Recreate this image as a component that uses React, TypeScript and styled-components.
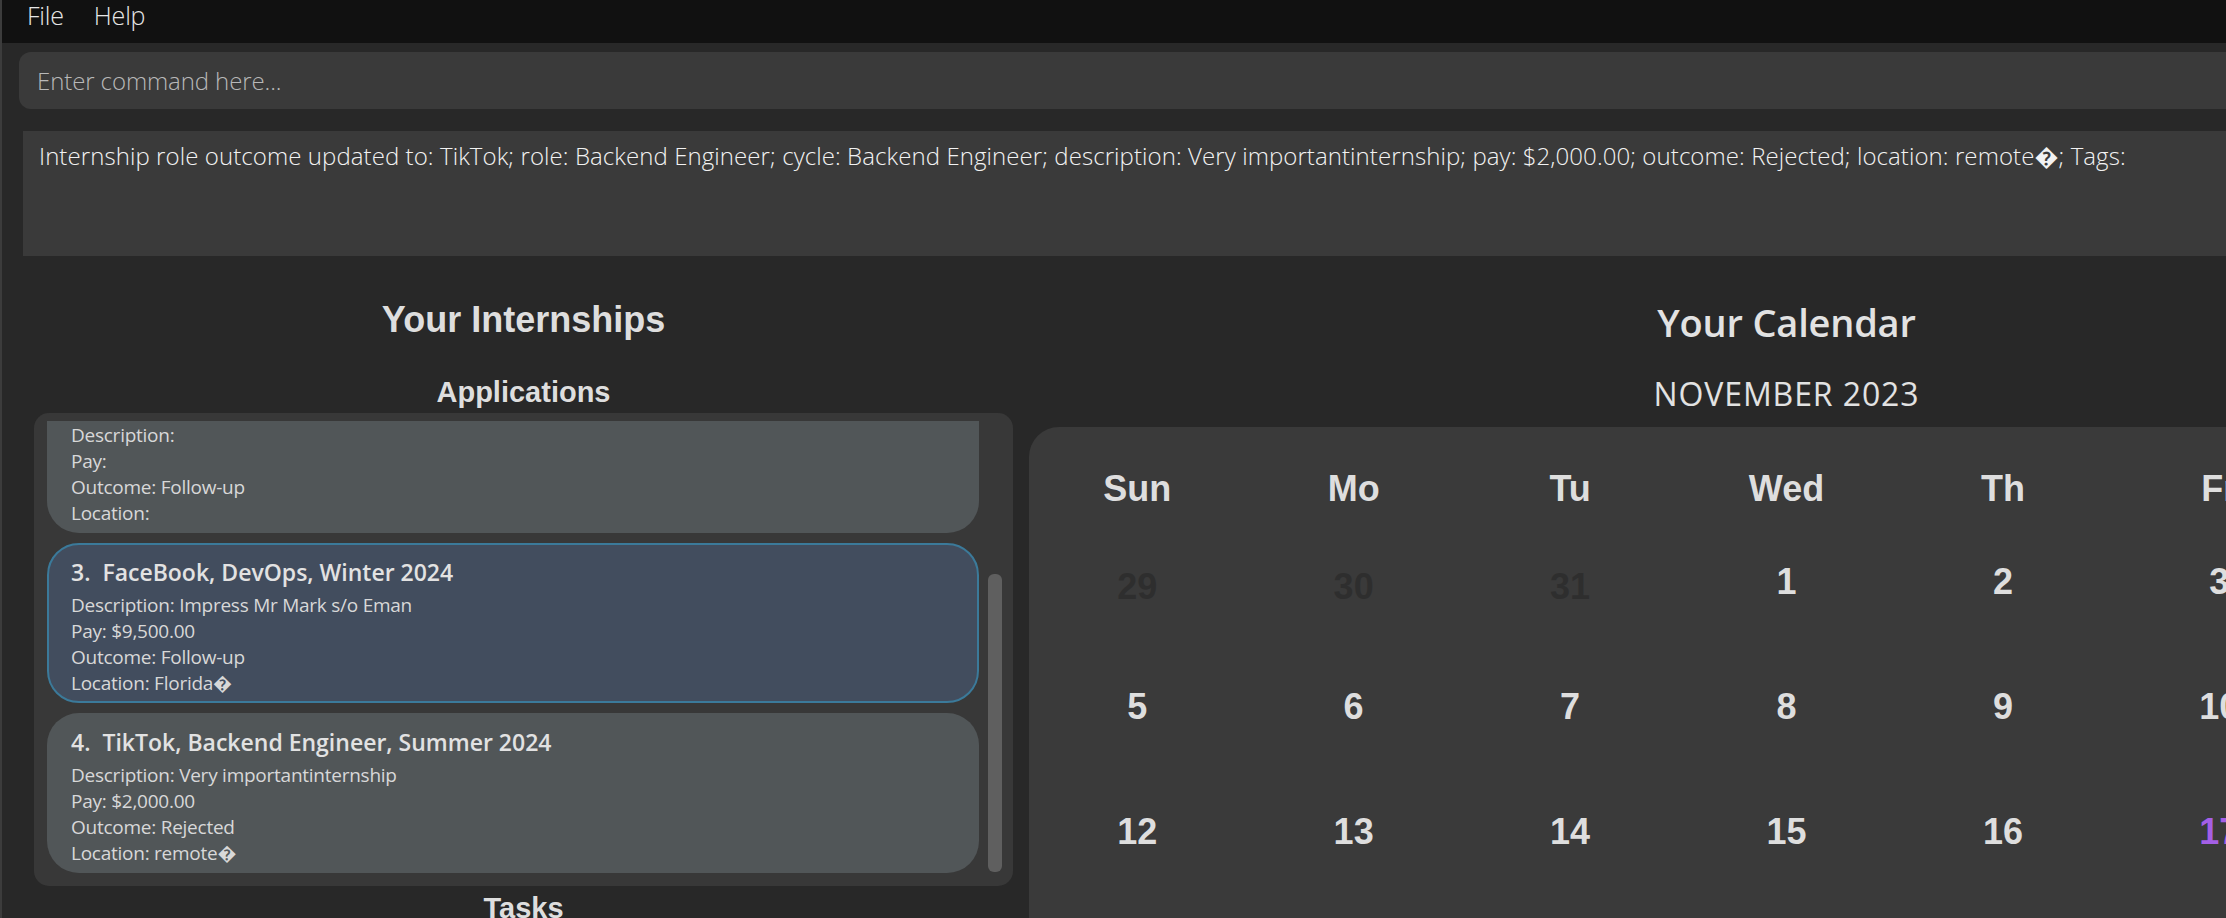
import React from 'react';
import styled, { createGlobalStyle } from 'styled-components';

interface Internship {
  id: number;
  title: string;
  description: string;
  pay: string;
  outcome: string;
  location: string;
}

const internships: Internship[] = [
  { id: 1, title: 'Google, Software Engineer, Summer 2024', description: 'Build search', pay: '$8,000.00', outcome: 'Interview', location: 'Singapore' },
  { id: 2, title: 'Shopee, Data Analyst, Winter 2024', description: '', pay: '', outcome: 'Follow-up', location: '' },
  { id: 3, title: 'FaceBook, DevOps, Winter 2024', description: 'Impress Mr Mark s/o Eman', pay: '$9,500.00', outcome: 'Follow-up', location: 'Florida\uFFFD' },
  { id: 4, title: 'TikTok, Backend Engineer, Summer 2024', description: 'Very importantinternship', pay: '$2,000.00', outcome: 'Rejected', location: 'remote\uFFFD' },
];

const SELECTED_ID = 3;
const TODAY = 17;

const resultText =
  'Internship role outcome updated to: TikTok; role: Backend Engineer; cycle: Backend Engineer; description: Very importantinternship; pay: $2,000.00; outcome: Rejected; location: remote\uFFFD; Tags:';

const weekDays = ['Sun', 'Mo', 'Tu', 'Wed', 'Th', 'Fr', 'Sa'];

type DayKind = 'muted' | 'normal' | 'today';

const buildMonth = () => {
  const days: { label: number; kind: DayKind }[] = [];
  [29, 30, 31].forEach(d => days.push({ label: d, kind: 'muted' }));
  for (let d = 1; d <= 30; d++) days.push({ label: d, kind: d === TODAY ? 'today' : 'normal' });
  [1, 2].forEach(d => days.push({ label: d, kind: 'muted' }));
  return days;
};

const GlobalStyle = createGlobalStyle`
  html, body {
    margin: 0;
    padding: 0;
    background: #282828;
    overflow: hidden;
  }
  #root {
    width: 2226px;
    height: 918px;
    overflow: hidden;
  }
`;

const Window = styled.div`
  width: 2560px;
  height: 918px;
  box-sizing: border-box;
  border-left: 2px solid #3c3c3c;
  background: #282828;
  display: flex;
  flex-direction: column;
  overflow: hidden;
  font-family: 'Open Sans', 'DejaVu Sans', sans-serif;
`;

const MenuBar = styled.div`
  height: 43px;
  flex-shrink: 0;
  background: #111111;
  display: flex;
  align-items: flex-start;
  gap: 30px;
  padding-left: 25px;
`;

const MenuItem = styled.span`
  font-size: 25px;
  font-weight: 300;
  line-height: 30px;
  letter-spacing: -0.2px;
  color: #e6e6e6;
`;

const CommandInput = styled.input`
  flex-shrink: 0;
  margin: 9px 0 0 17px;
  height: 57px;
  box-sizing: border-box;
  border: none;
  outline: none;
  border-radius: 12px;
  background: #3a3a3a;
  padding: 0 18px;
  font-family: 'Open Sans', 'DejaVu Sans', sans-serif;
  font-size: 24px;
  font-weight: 300;
  letter-spacing: -0.1px;
  color: #f0f0f0;

  &::placeholder {
    color: #b8b8b8;
  }
`;

const ResultDisplay = styled.div`
  flex-shrink: 0;
  margin: 22px 0 0 21px;
  height: 125px;
  box-sizing: border-box;
  background: #3a3a3a;
  padding: 9px 16px;
  font-size: 24px;
  font-weight: 300;
  line-height: 32px;
  letter-spacing: 0.08px;
  color: #f2f2f2;
  white-space: nowrap;
`;

const Main = styled.div`
  display: flex;
  margin-top: 42px;
  flex: 1;
  min-height: 0;
`;

const LeftPane = styled.div`
  width: 1027px;
  flex-shrink: 0;
  box-sizing: border-box;
  padding: 0 16px 0 32px;
  display: flex;
  flex-direction: column;
`;

const PaneTitle = styled.div`
  font-family: 'Liberation Sans', Arial, sans-serif;
  font-weight: 700;
  font-size: 36px;
  line-height: 42px;
  margin-top: 1px;
  color: #dedede;
  text-align: center;
`;

const SectionTitle = styled.div<{ $gap: number }>`
  font-family: 'Liberation Sans', Arial, sans-serif;
  font-weight: 700;
  font-size: 29px;
  line-height: 36px;
  color: #dedede;
  text-align: center;
  margin-top: ${p => p.$gap}px;
`;

const ListPanel = styled.div`
  margin-top: 3px;
  height: 473px;
  flex-shrink: 0;
  box-sizing: border-box;
  background: #383838;
  border-radius: 15px;
  padding: 8px 11px 13px 13px;
  display: flex;
  gap: 9px;
`;

const ListViewport = styled.div`
  flex: 1;
  overflow: hidden;
  display: flex;
  flex-direction: column;
  justify-content: flex-end;
  gap: 10px;
`;

const Card = styled.div<{ $selected: boolean }>`
  flex-shrink: 0;
  height: 160px;
  box-sizing: border-box;
  border: 2px solid ${p => (p.$selected ? '#3b7a9a' : 'transparent')};
  background: ${p => (p.$selected ? '#424d5e' : '#515658')};
  border-radius: 32px;
  padding: 12px 22px 0;
`;

const CardTitle = styled.div`
  font-size: 23px;
  font-weight: 600;
  line-height: 30px;
  color: #e2e2e2;
  white-space: pre;
`;

const CardBody = styled.div`
  margin-top: 5px;
  font-size: 19px;
  line-height: 26px;
  letter-spacing: -0.25px;
  color: #d8d8d8;
  white-space: nowrap;
`;

const ScrollTrack = styled.div`
  width: 14px;
  flex-shrink: 0;
  display: flex;
  flex-direction: column;
  justify-content: flex-end;
  padding-bottom: 1px;
`;

const ScrollThumb = styled.div<{ $length: number }>`
  height: ${p => p.$length}px;
  border-radius: 6px;
  background: #5f5f5f;
`;

const RightPane = styled.div`
  width: 1515px;
  flex-shrink: 0;
  display: flex;
  flex-direction: column;
`;

const CalendarTitle = styled.div`
  font-size: 38px;
  font-weight: 600;
  line-height: 48px;
  letter-spacing: -0.2px;
  color: #e2e2e2;
  text-align: center;
`;

const MonthLabel = styled.div`
  margin-top: 27px;
  font-size: 32px;
  font-weight: 400;
  line-height: 42px;
  letter-spacing: 0.9px;
  color: #e2e2e2;
  text-align: center;
`;

const CalendarPanel = styled.div`
  margin-top: 12px;
  flex: 1;
  background: #3a3a3a;
  border-radius: 30px;
  padding-top: 37px;
`;

const CalendarGrid = styled.div`
  display: grid;
  grid-template-columns: repeat(7, 1fr);
  grid-template-rows: 55px repeat(5, 125px);
  font-family: 'Liberation Sans', Arial, sans-serif;
  font-weight: 700;
  font-size: 36px;
  text-align: center;
`;

const DayHeader = styled.div`
  line-height: 50px;
  color: #dedede;
`;

const DateCell = styled.div<{ $kind: DayKind }>`
  line-height: 125px;
  box-sizing: border-box;
  padding-top: ${p => (p.$kind === 'muted' ? 5 : 0)}px;
  color: ${p => (p.$kind === 'muted' ? '#2e2e2e' : p.$kind === 'today' ? '#a45fe6' : '#dedede')};
`;

const InternshipCard: React.FC<{ item: Internship; selected: boolean }> = ({ item, selected }) => (
  <Card $selected={selected}>
    <CardTitle>{`${item.id}.  ${item.title}`}</CardTitle>
    <CardBody>
      <div>Description: {item.description}</div>
      <div>Pay: {item.pay}</div>
      <div>Outcome: {item.outcome}</div>
      <div>Location: {item.location}</div>
    </CardBody>
  </Card>
);

const App: React.FC = () => {
  const days = buildMonth();
  // list is scrolled to the bottom: thumb = viewport / content
  const viewport = 452;
  const content = internships.length * 160 + (internships.length - 1) * 10;
  const thumb = Math.round((viewport * viewport) / content) - 7;

  return (
    <>
      <GlobalStyle />
      <Window>
        <MenuBar>
          <MenuItem>File</MenuItem>
          <MenuItem>Help</MenuItem>
        </MenuBar>
        <CommandInput placeholder="Enter command here..." />
        <ResultDisplay>{resultText}</ResultDisplay>
        <Main>
          <LeftPane>
            <PaneTitle>Your Internships</PaneTitle>
            <SectionTitle $gap={33}>Applications</SectionTitle>
            <ListPanel>
              <ListViewport>
                {internships.map(item => (
                  <InternshipCard key={item.id} item={item} selected={item.id === SELECTED_ID} />
                ))}
              </ListViewport>
              <ScrollTrack>
                <ScrollThumb $length={thumb} />
              </ScrollTrack>
            </ListPanel>
            <SectionTitle $gap={4}>Tasks</SectionTitle>
          </LeftPane>
          <RightPane>
            <CalendarTitle>Your Calendar</CalendarTitle>
            <MonthLabel>NOVEMBER 2023</MonthLabel>
            <CalendarPanel>
              <CalendarGrid>
                {weekDays.map(d => (
                  <DayHeader key={d}>{d}</DayHeader>
                ))}
                {days.map((d, i) => (
                  <DateCell key={i} $kind={d.kind}>
                    {d.label}
                  </DateCell>
                ))}
              </CalendarGrid>
            </CalendarPanel>
          </RightPane>
        </Main>
      </Window>
    </>
  );
};

export default App;
